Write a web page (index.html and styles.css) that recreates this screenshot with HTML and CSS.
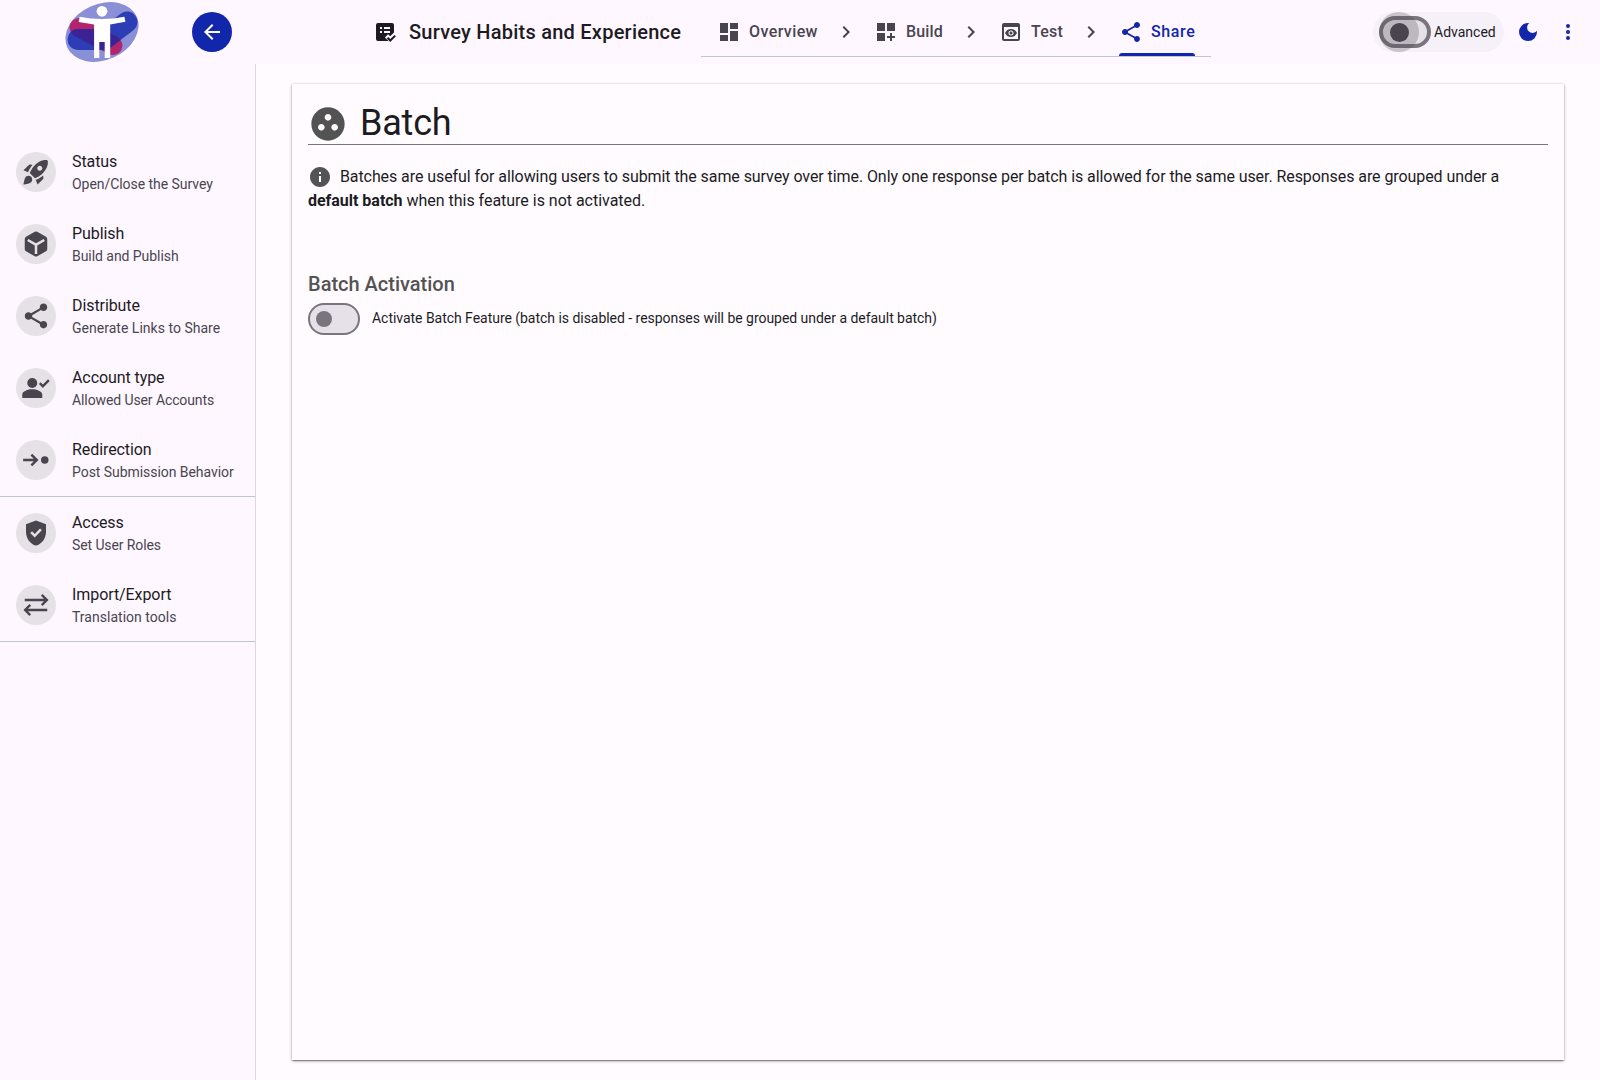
FILE: index.html
```
<!DOCTYPE html>
<html lang="en">
<head>
<meta charset="utf-8">
<title>Survey Habits and Experience</title>
<link rel="stylesheet" href="styles.css">
</head>
<body>

<!-- shared icon shapes -->
<svg class="sprite">
	<symbol id="i-share" viewBox="0 0 24 24"><path d="M18 16.08c-.76 0-1.44.3-1.96.77L8.91 12.7c.05-.23.09-.46.09-.7s-.04-.47-.09-.7l7.05-4.11c.54.5 1.25.81 2.04.81 1.66 0 3-1.34 3-3s-1.34-3-3-3-3 1.34-3 3c0 .24.04.47.09.7L8.04 9.81C7.5 9.31 6.79 9 6 9c-1.66 0-3 1.34-3 3s1.34 3 3 3c.79 0 1.5-.31 2.04-.81l7.12 4.16c-.05.21-.08.43-.08.65 0 1.61 1.31 2.92 2.92 2.92s2.92-1.31 2.92-2.92-1.31-2.92-2.92-2.92z"/></symbol>
	<symbol id="i-chevron" viewBox="0 0 24 24"><path d="M10 6L8.59 7.41 13.17 12l-4.58 4.59L10 18l6-6z"/></symbol>
</svg>

<header class="topbar">
	<div class="brand">
		<svg class="logo" width="76" height="62" viewBox="0 0 76 62">
			<mask id="blue-band" maskUnits="userSpaceOnUse" x="0" y="0" width="76" height="62">
				<path d="M14 38.500H40L63 21" stroke="#fff" stroke-width="21" stroke-linecap="round" stroke-linejoin="round" fill="none"/>
			</mask>
			<ellipse cx="38" cy="31" rx="38" ry="28" transform="rotate(-24 38 31)" fill="#8990d5"/>
			<path d="M15 26.500L49 44.500" stroke="#b2246b" stroke-width="19" stroke-linecap="round"/>
			<path d="M14 38.500H40L63 21" stroke="#2c3db5" stroke-width="21" stroke-linecap="round" stroke-linejoin="round" fill="none"/>
			<path d="M15 26.500L49 44.500" stroke="#3b2395" stroke-width="19" stroke-linecap="round" mask="url(#blue-band)"/>
			<circle cx="38" cy="10.300" r="5.400" fill="#fff"/>
			<path d="M15.600 15.700q22.400 4.800 44.800 0l1 5-15.200 2.800V57h-5.500V41h-5.400v16h-5.200V23.500l-15.400-2.600z" fill="#fff"/>
		</svg>
		<button class="back" aria-label="Back">
			<svg width="24" height="24" viewBox="0 0 24 24"><path d="M20 11H7.830l5.590-5.590L12 4l-8 8 8 8 1.410-1.410L7.830 13H20v-2z"/></svg>
		</button>
	</div>

	<div class="survey">
		<svg width="24" height="24" viewBox="0 0 24 24"><path fill-rule="evenodd" d="M5 3h14a2 2 0 0 1 2 2v7.500L17.200 16.300l-2.100-2.100-3.200 3.200L15.500 21H5a2 2 0 0 1-2-2V5a2 2 0 0 1 2-2zM7 7v2h2V7zm0 4v2h2v-2zm4-4v2h6V7zm0 4v2h6v-2z"/><path d="M17.300 22l-3.600-3.600 1.400-1.400 2.200 2.100 4.200-4.200 1.400 1.400z"/></svg>
		<span>Survey Habits and Experience</span>
	</div>

	<nav class="tabs">
		<a class="tab wide">
			<svg width="24" height="24" viewBox="0 0 24 24"><path d="M3 13h8V3H3zm0 8h8v-6H3zm10 0h8V11h-8zm0-18v6h8V3z"/></svg>
			<span>Overview</span>
		</a>
		<svg width="24" height="24"><use href="#i-chevron"/></svg>
		<a class="tab">
			<svg width="24" height="24" viewBox="0 0 24 24"><path d="M3 3h8v8H3zm10 0h8v8h-8zM3 13h8v8H3zm15 0h-2v3h-3v2h3v3h2v-3h3v-2h-3z"/></svg>
			<span>Build</span>
		</a>
		<svg width="24" height="24"><use href="#i-chevron"/></svg>
		<a class="tab">
			<svg width="24" height="24" viewBox="0 0 24 24"><path d="M19 3H5c-1.110 0-2 .9-2 2v14c0 1.100.89 2 2 2h14c1.100 0 2-.9 2-2V5c0-1.100-.89-2-2-2zm0 16H5V7h14v12zm-5.500-6c0 .83-.67 1.500-1.500 1.500s-1.500-.67-1.500-1.500.67-1.500 1.500-1.500 1.500.67 1.500 1.500zM12 9c-2.730 0-5.060 1.660-6 4 .94 2.340 3.270 4 6 4s5.060-1.660 6-4c-.94-2.340-3.270-4-6-4zm0 6.500c-1.380 0-2.500-1.120-2.500-2.500s1.120-2.500 2.500-2.500 2.500 1.120 2.500 2.500-1.120 2.500-2.500 2.500z"/></svg>
			<span>Test</span>
		</a>
		<svg width="24" height="24"><use href="#i-chevron"/></svg>
		<a class="tab wide active">
			<svg width="24" height="24"><use href="#i-share"/></svg>
			<span>Share</span>
		</a>
	</nav>

	<div class="tools">
		<label class="advanced">
			<span class="switch focused"><span class="knob"></span></span>
			<span>Advanced</span>
		</label>
		<svg width="24" height="24" viewBox="0 0 24 24"><path d="M12 21q-3.750 0-6.375-2.625T3 12t2.625-6.375T12 3q.35 0 .688.025t.662.075q-1.025.725-1.638 1.888T11.100 7.500q0 2.250 1.575 3.825T16.500 12.900q1.375 0 2.525-.613T20.900 10.650q.05.325.075.662T21 12q0 3.750-2.625 6.375T12 21Z"/></svg>
		<svg width="24" height="24" viewBox="0 0 24 24"><circle cx="12" cy="6" r="2"/><circle cx="12" cy="12" r="2"/><circle cx="12" cy="18" r="2"/></svg>
	</div>
</header>

<div class="page">
	<aside class="sidebar">
		<a class="item">
			<span class="avatar"><svg width="30" height="30" viewBox="0 0 24 24"><path d="M9.190 6.350c-2.040 2.290-3.440 5.580-3.570 5.890L2 10.690l4.050-4.050c.47-.47 1.150-.68 1.810-.55l1.330.26zM11.170 17s3.740-1.550 5.890-3.700c5.400-5.400 4.500-9.620 4.210-10.570-.95-.3-5.170-1.190-10.570 4.210C8.550 9.090 7 12.830 7 12.830L11.170 17zm6.480-2.190c-2.290 2.040-5.580 3.440-5.890 3.570L13.310 22l4.050-4.050c.47-.47.68-1.150.55-1.810l-.26-1.330zM9 18c0 .83-.34 1.580-.88 2.120C6.940 21.300 2 22 2 22s.7-4.940 1.880-6.120C4.420 15.340 5.170 15 6 15c1.660 0 3 1.340 3 3zm4-9c0-1.100.9-2 2-2s2 .9 2 2-.9 2-2 2-2-.9-2-2z"/></svg></span>
			<span class="text"><b>Status</b><small>Open/Close the Survey</small></span>
		</a>
		<a class="item">
			<span class="avatar"><svg width="30" height="30" viewBox="0 0 24 24"><path fill-rule="evenodd" d="M12 1.900q.5 0 1 .28l7 4.020q1 .6 1 1.700v8.200q0 1.100-1 1.700l-7 4.020q-1 .56-2 0l-7-4.020q-1-.6-1-1.700V7.900q0-1.100 1-1.700l7-4.020q.5-.28 1-.28zM5.900 7.900L4.900 9.600l6.100 3.600V20h2v-6.800l6.100-3.600-1-1.700L12 11.450z"/></svg></span>
			<span class="text"><b>Publish</b><small>Build and Publish</small></span>
		</a>
		<a class="item">
			<span class="avatar"><svg width="30" height="30"><use href="#i-share"/></svg></span>
			<span class="text loose"><b>Distribute</b><small>Generate Links to Share</small></span>
		</a>
		<a class="item">
			<span class="avatar"><svg width="30" height="30" viewBox="0 0 24 24"><circle cx="9" cy="8" r="4"/><path d="M9 13c-3.500 0-8 1.600-8 4.200V20h16v-2.800C17 14.600 12.500 13 9 13zM17.500 11.900l-3.200-3.200 1.400-1.400 1.800 1.800 4.100-4.100L23 6.400z"/></svg></span>
			<span class="text tight"><b>Account type</b><small>Allowed User Accounts</small></span>
		</a>
		<a class="item">
			<span class="avatar"><svg width="30" height="30" viewBox="0 0 24 24"><circle cx="19" cy="12" r="3"/><path d="M9 7L7.600 8.400l2.600 2.600H1.700v2h8.500l-2.600 2.600L9 17l5-5z"/></svg></span>
			<span class="text"><b>Redirection</b><small>Post Submission Behavior</small></span>
		</a>
		<hr>
		<a class="item">
			<span class="avatar"><svg width="30" height="30" viewBox="0 0 24 24"><path fill-rule="evenodd" d="M12 2l8 3v6.100c0 5.050-3.400 9.750-8 10.900-4.600-1.150-8-5.850-8-10.900V5zm-1.050 13.500l5.650-5.650-1.400-1.400-4.250 4.250-2.100-2.150-1.450 1.400z"/></svg></span>
			<span class="text tight"><b>Access</b><small>Set User Roles</small></span>
		</a>
		<a class="item">
			<span class="avatar"><svg class="line" width="30" height="30" viewBox="0 0 24 24"><path d="M3 8h17.500M16.600 3.900L20.700 8l-4.100 4.100M21 16H3.500M7.400 11.900L3.300 16l4.100 4.100"/></svg></span>
			<span class="text loose"><b>Import/Export</b><small>Translation tools</small></span>
		</a>
		<hr>
	</aside>

	<main class="content">
		<section class="card">
			<h1>
				<svg width="40" height="40" viewBox="0 0 24 24"><path d="M12 2C6.480 2 2 6.480 2 12s4.480 10 10 10 10-4.480 10-10S17.520 2 12 2zM8 16c-1.100 0-2-.9-2-2s.9-2 2-2 2 .9 2 2-.9 2-2 2zm2-8c0-1.100.9-2 2-2s2 .9 2 2-.9 2-2 2-2-.9-2-2zm6 8c-1.100 0-2-.9-2-2s.9-2 2-2 2 .9 2 2-.9 2-2 2z"/></svg>
				<span>Batch</span>
			</h1>
			<p class="info">
				<svg width="24" height="24" viewBox="0 0 24 24"><path d="M12 2C6.480 2 2 6.480 2 12s4.480 10 10 10 10-4.480 10-10S17.520 2 12 2zm1 15h-2v-6h2v6zm0-8h-2V7h2v2z"/></svg>
				Batches are useful for allowing users to submit the same survey over time. Only one response per batch is allowed for the same user. Responses are grouped under a <span class="end"><strong>default batch</strong> when this feature is not activated.</span>
			</p>
			<h2>Batch Activation</h2>
			<label class="activate">
				<span class="switch"><span class="knob"></span></span>
				<span class="caption">Activate Batch Feature (batch is disabled - responses will be grouped under a default batch)</span>
			</label>
		</section>
	</main>
</div>

</body>
</html>
```
FILE: styles.css
```
* {
	box-sizing: border-box;
}

body {
	margin: 0;
	height: 100vh;
	display: flex;
	flex-direction: column;
	overflow: hidden;
	font-family: Roboto, sans-serif;
	font-size: 16px;
	line-height: 24px;
	color: #1c1b1f;
	background: #fffbff;
}

svg {
	flex: none;
	fill: currentColor;
}

.line {
	fill: none;
	stroke: currentColor;
	stroke-width: 1.9;
}

.sprite {
	display: none;
}

/* top bar */

.topbar {
	display: flex;
	align-items: center;
	flex: none;
	height: 64px;
	background: #fef7ff;
}

.brand {
	display: flex;
	align-items: center;
	gap: 52px;
	width: 373px;
	padding-left: 64px;
}

.logo {
	fill: none;
}

.back {
	display: grid;
	place-items: center;
	width: 40px;
	height: 40px;
	padding: 0;
	border: 0;
	border-radius: 50%;
	color: #fff;
	background: #1126aa;
}

.survey {
	display: flex;
	align-items: center;
	gap: 12px;
	width: 328px;
	font-size: 20px;
	font-weight: 500;
	letter-spacing: 0.24px;
	white-space: nowrap;
}

.tabs {
	display: flex;
	align-items: center;
	align-self: flex-start;
	height: 49px;
	margin-top: 8px;
	border-bottom: 1px solid #bfc8ca;
	color: #49454f;
}

.tab {
	position: relative;
	display: flex;
	align-items: center;
	gap: 8px;
	height: 48px;
	padding: 0 16px;
	font-weight: 500;
	letter-spacing: 0.2px;
}

.tab.wide {
	letter-spacing: 0.4px;
}

.tab.active {
	color: #1126aa;
	letter-spacing: 0.6px;
}

.tab.active::after {
	content: "";
	position: absolute;
	left: 16px;
	right: 16px;
	bottom: 0;
	height: 3px;
	border-radius: 3px 3px 0 0;
	background: #1126aa;
}

.tools {
	display: flex;
	align-items: center;
	gap: 16px;
	margin-left: auto;
	padding-right: 20px;
	color: #1126aa;
}

.advanced {
	display: flex;
	align-items: center;
	gap: 3px;
	width: 131px;
	height: 40px;
	margin-right: -4px;
	padding-left: 6px;
	border-radius: 20px;
	font-size: 14px;
	color: #1c1b1f;
	background: #f6f1f9;
}

/* switches */

.switch {
	position: relative;
	display: flex;
	align-items: center;
	flex: none;
	width: 52px;
	height: 32px;
	padding-left: 6px;
	border: 2px solid #79747e;
	border-radius: 16px;
	background: #e6e0e9;
}

.knob {
	width: 16px;
	height: 16px;
	border-radius: 50%;
	background: #79747e;
}

.switch.focused {
	padding-left: 7px;
	border-width: 4px;
}

.switch.focused .knob {
	width: 19px;
	height: 19px;
	background: #49454f;
}

.switch.focused::before {
	content: "";
	position: absolute;
	left: -4px;
	top: -8px;
	width: 40px;
	height: 40px;
	border-radius: 50%;
	background: rgba(73, 69, 79, 0.26);
}

/* sidebar */

.page {
	display: flex;
	flex: 1;
}

.sidebar {
	width: 256px;
	padding-top: 72px;
	border-right: 1px solid #dcd6dd;
	background: #fef7ff;
}

.item {
	display: flex;
	align-items: center;
	gap: 16px;
	height: 72px;
	padding: 0 16px;
}

.avatar {
	display: grid;
	place-items: center;
	width: 40px;
	height: 40px;
	border-radius: 50%;
	color: #49454f;
	background: #e6e1e6;
}

.text {
	display: flex;
	flex-direction: column;
	white-space: nowrap;
	letter-spacing: -0.05px;
}

.text b {
	font-weight: 400;
	line-height: 24px;
	letter-spacing: -0.08px;
}

.text small {
	font-size: 14px;
	line-height: 20px;
	color: #49454f;
}

.text.loose small {
	letter-spacing: 0.02px;
}

.text.tight small {
	letter-spacing: -0.1px;
}

.sidebar hr {
	height: 1px;
	margin: 0;
	border: 0;
	background: #bfc8ca;
}

/* content */

.content {
	display: flex;
	flex: 1;
	padding: 20px 36px;
}

.card {
	flex: 1;
	padding: 16px;
	background: #fffbff;
	box-shadow: 0 2px 1px -1px rgba(0, 0, 0, 0.2), 0 1px 1px rgba(0, 0, 0, 0.14), 0 1px 3px rgba(0, 0, 0, 0.3), 0 0 2px rgba(0, 0, 0, 0.1);
}

h1 {
	display: flex;
	align-items: center;
	gap: 12px;
	height: 45px;
	margin: 0 0 20px;
	padding-top: 3px;
	border-bottom: 1px solid #79747e;
	font-size: 36px;
	font-weight: 400;
	line-height: 44px;
	letter-spacing: -0.2px;
}

h1 span {
	padding-bottom: 2px;
}

h1 svg,
.info svg {
	color: #535353;
}

.info {
	margin: 0 0 59px;
	letter-spacing: -0.073px;
}

.info .end {
	letter-spacing: -0.02px;
}

.info svg {
	margin: -2px 4px -2px 0;
	vertical-align: -5px;
}

h2 {
	margin: 0 0 7px;
	font-size: 20px;
	font-weight: 500;
	line-height: 24px;
	color: #535353;
}

.activate {
	display: flex;
	align-items: center;
	gap: 12px;
	font-size: 14px;
	letter-spacing: -0.035px;
}

.caption {
	padding-bottom: 2px;
}
```
